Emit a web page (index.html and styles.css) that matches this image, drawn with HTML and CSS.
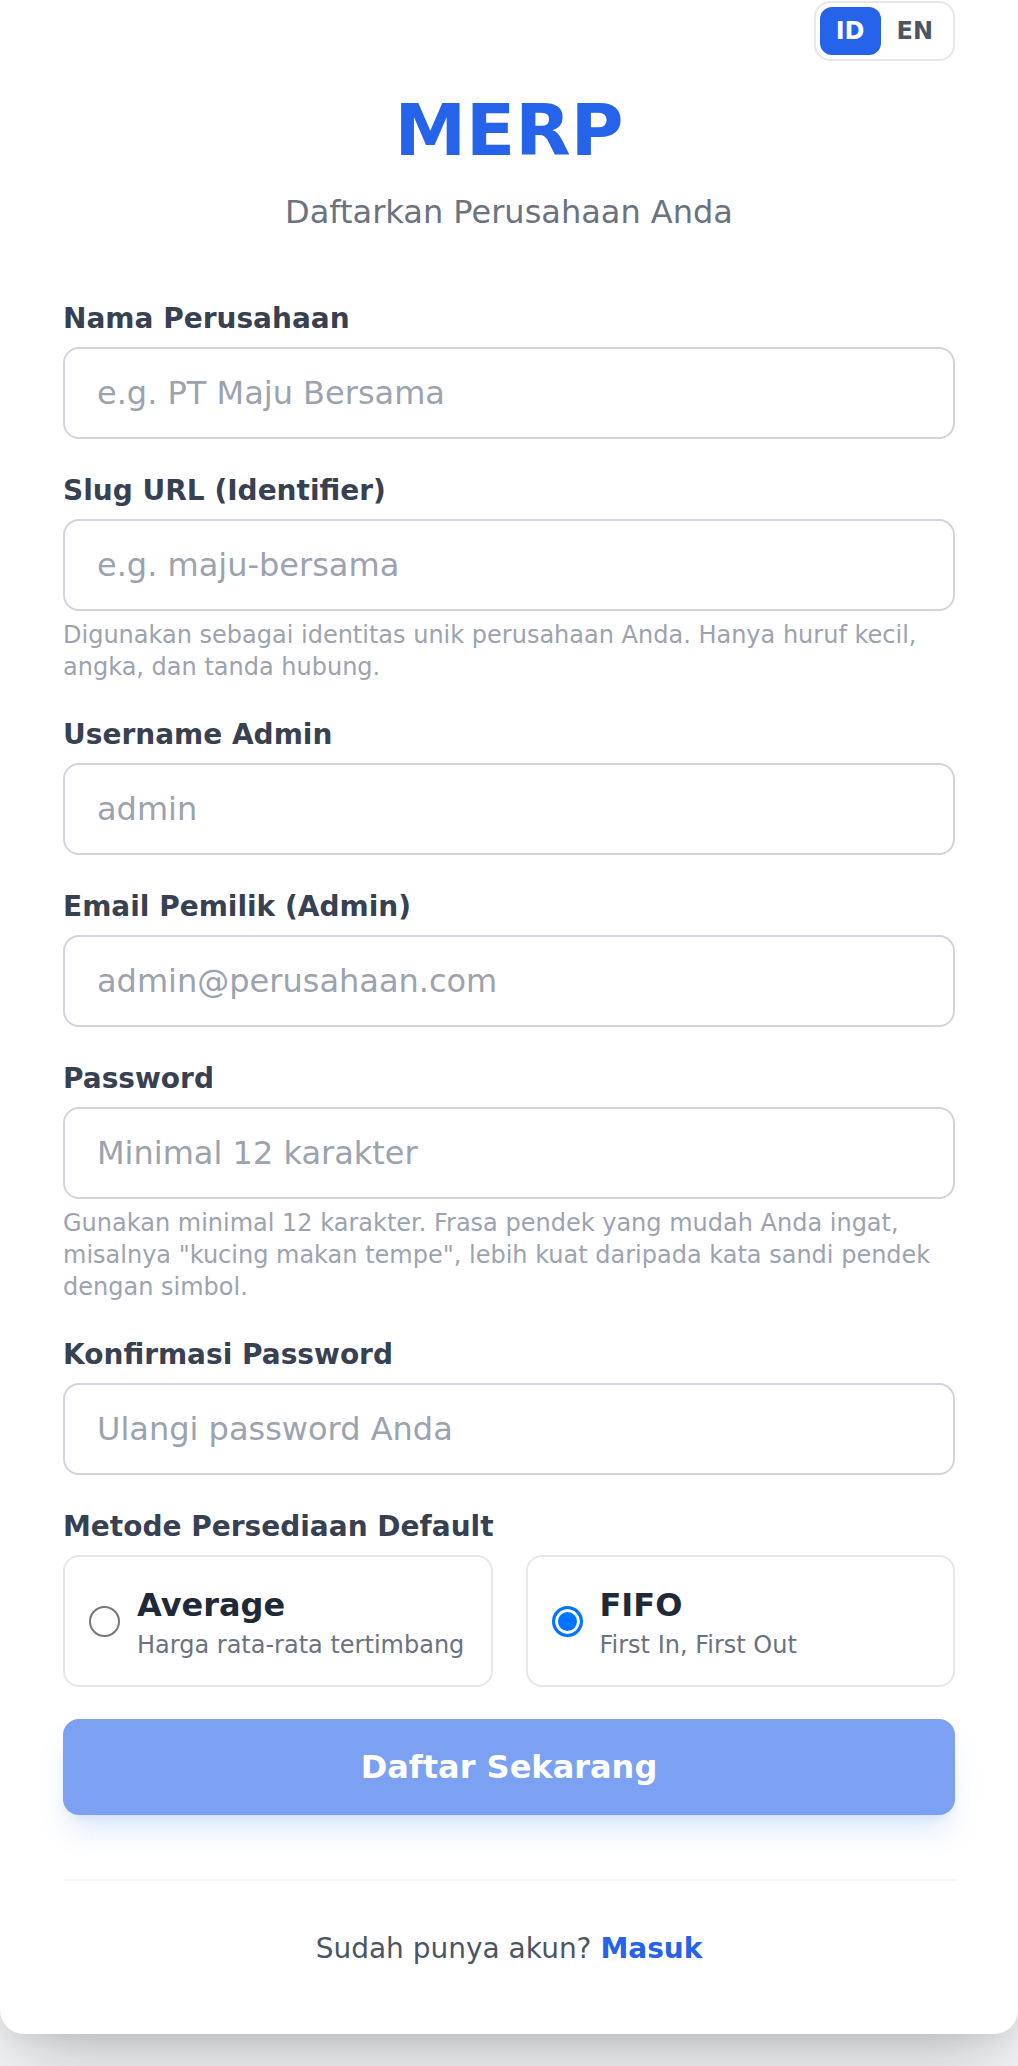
FILE: index.html
```html
<!DOCTYPE html>
<html lang="id">
<head>
<meta charset="utf-8">
<title>MERP - Daftar</title>
<link rel="stylesheet" href="styles.css">
</head>
<body>
<div class="card">
  <div class="lang-row">
    <div class="lang-toggle">
      <button class="lang-btn active" type="button">ID</button>
      <button class="lang-btn" type="button">EN</button>
    </div>
  </div>

  <header class="header">
    <h1 class="brand">MERP</h1>
    <p class="subtitle">Daftarkan Perusahaan Anda</p>
  </header>

  <form class="form">
    <div class="field">
      <label class="label">Nama Perusahaan</label>
      <input class="input" type="text" placeholder="e.g. PT Maju Bersama">
    </div>

    <div class="field">
      <label class="label">Slug URL (Identifier)</label>
      <input class="input" type="text" placeholder="e.g. maju-bersama">
      <p class="help">Digunakan sebagai identitas unik perusahaan Anda. Hanya huruf kecil, angka, dan tanda hubung.</p>
    </div>

    <div class="field">
      <label class="label">Username Admin</label>
      <input class="input" type="text" placeholder="admin">
    </div>

    <div class="field">
      <label class="label">Email Pemilik (Admin)</label>
      <input class="input" type="email" placeholder="admin@perusahaan.com">
    </div>

    <div class="field">
      <label class="label">Password</label>
      <input class="input" type="password" placeholder="Minimal 12 karakter">
      <p class="help">Gunakan minimal 12 karakter. Frasa pendek yang mudah Anda ingat, misalnya "kucing makan tempe", lebih kuat daripada kata sandi pendek dengan simbol.</p>
    </div>

    <div class="field">
      <label class="label">Konfirmasi Password</label>
      <input class="input" type="password" placeholder="Ulangi password Anda">
    </div>

    <div class="field">
      <label class="label">Metode Persediaan Default</label>
      <div class="methods">
        <label class="method">
          <input class="radio" type="radio" name="method" value="average">
          <span class="method-text">
            <span class="method-title">Average</span>
            <span class="method-sub">Harga rata-rata tertimbang</span>
          </span>
        </label>
        <label class="method">
          <input class="radio" type="radio" name="method" value="fifo" checked>
          <span class="method-text">
            <span class="method-title">FIFO</span>
            <span class="method-sub">First In, First Out</span>
          </span>
        </label>
      </div>
    </div>

    <button class="submit" type="button">Daftar Sekarang</button>
  </form>

  <footer class="footer">
    <p class="footer-text">Sudah punya akun? <a class="link" href="#">Masuk</a></p>
  </footer>
</div>
</body>
</html>
```

FILE: styles.css
```css
* {
  box-sizing: border-box;
}

html, body {
  margin: 0;
  padding: 0;
}

body {
  background: #f3f4f6;
  font-family: "DejaVu Sans", "Noto Sans", sans-serif;
  color: #374151;
  min-height: 2066px;
}

.card {
  width: 1018px;
  background: #ffffff;
  padding: 0 63px 65px 63px;
  border-radius: 0 0 24px 24px;
  box-shadow: 0 40px 80px -20px rgba(0, 0, 0, 0.22), 0 8px 20px rgba(0, 0, 0, 0.06);
}

.lang-row {
  display: flex;
  justify-content: flex-end;
  padding-top: 1px;
}

.lang-toggle {
  display: flex;
  padding: 4px;
  border: 2px solid #e5e7eb;
  border-radius: 16px;
  background: #ffffff;
}

.lang-btn {
  height: 48px;
  padding: 0 16px;
  border: 0;
  border-radius: 12px;
  background: transparent;
  font-family: "DejaVu Sans", sans-serif;
  font-size: 24px;
  font-weight: 700;
  color: #4b5563;
  line-height: 48px;
}

.lang-btn.active {
  background: #2563eb;
  color: #ffffff;
}

.header {
  text-align: center;
  margin-top: 29px;
  margin-bottom: 63px;
}

.brand {
  margin: 0;
  font-size: 72px;
  line-height: 80px;
  font-weight: 700;
  color: #2563eb;
}

.subtitle {
  margin: 18px 0 0;
  font-size: 32px;
  line-height: 48px;
  color: #6b7280;
}

.form {
  display: flex;
  flex-direction: column;
  gap: 32px;
}

.field {
  display: flex;
  flex-direction: column;
}

.label {
  display: block;
  font-size: 28px;
  line-height: 40px;
  font-weight: 700;
  color: #374151;
  margin-bottom: 8px;
}

.input {
  width: 100%;
  height: 92px;
  padding: 0 32px;
  border: 2px solid #d1d5db;
  border-radius: 16px;
  background: #ffffff;
  font-family: "DejaVu Sans", sans-serif;
  font-size: 32px;
  color: #111827;
  outline: none;
}

.input::placeholder {
  color: #9ca3af;
  opacity: 1;
}

.help {
  margin: 8px 0 0;
  font-size: 24px;
  line-height: 32px;
  color: #9ca3af;
}

.methods {
  display: grid;
  grid-template-columns: 1fr 1fr;
  gap: 33px;
}

.method {
  display: flex;
  align-items: center;
  gap: 17px;
  padding: 24px 22px 24px 24px;
  border: 2px solid #e5e7eb;
  border-radius: 16px;
  background: #ffffff;
}

.radio {
  appearance: none;
  -webkit-appearance: none;
  flex: none;
  width: 31px;
  height: 31px;
  margin: 0;
  border: 2px solid #767676;
  border-radius: 50%;
  background: #ffffff;
}

.radio:checked {
  border: 3px solid #0075ff;
  background: #0075ff;
  box-shadow: inset 0 0 0 3px #ffffff;
}

.method-text {
  display: flex;
  flex-direction: column;
}

.method-title {
  font-size: 32px;
  line-height: 48px;
  font-weight: 700;
  color: #1f2937;
}

.method-sub {
  font-size: 24px;
  line-height: 32px;
  color: #6b7280;
}

.submit {
  height: 96px;
  width: 100%;
  border: 0;
  border-radius: 16px;
  background: #7ca1f3;
  color: #ffffff;
  font-family: "DejaVu Sans", sans-serif;
  font-size: 32px;
  font-weight: 700;
  box-shadow: 0 20px 30px -6px rgba(59, 130, 246, 0.18), 0 8px 12px -8px rgba(59, 130, 246, 0.18);
}

.footer {
  margin-top: 64px;
  border-top: 2px solid #f3f4f6;
  padding-top: 48px;
  text-align: center;
}

.footer-text {
  margin: 0;
  font-size: 28px;
  line-height: 40px;
  color: #4b5563;
}

.link {
  color: #2563eb;
  font-weight: 700;
  text-decoration: none;
}
```
